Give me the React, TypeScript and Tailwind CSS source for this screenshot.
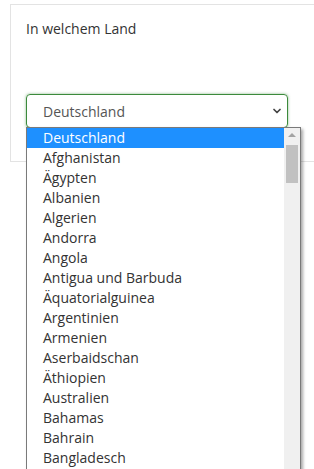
import { ChevronDown } from "lucide-react"

const countries = [
  "Deutschland",
  "Afghanistan",
  "Ägypten",
  "Albanien",
  "Algerien",
  "Andorra",
  "Angola",
  "Antigua und Barbuda",
  "Äquatorialguinea",
  "Argentinien",
  "Armenien",
  "Aserbaidschan",
  "Äthiopien",
  "Australien",
  "Bahamas",
  "Bahrain",
  "Bangladesch",
]

export default function App() {
  return (
    <div className="w-[314px] h-[469px] overflow-hidden bg-white font-['Open_Sans',sans-serif] text-[14px]">
      <div className="relative ml-[10px] mt-[4px] w-[330px] h-[158px] border border-[#e3e3e3] pl-[15px] pt-[14px]">
        <p className="text-[#333] leading-5">In welchem Land</p>

        <div className="mt-[55px] w-[262px] h-[34px] rounded-[4px] border border-[#3c8a3c] shadow-[0_0_3px_rgba(60,138,60,0.6)] flex items-center justify-between pl-[16px] pr-[4px] text-[#555]">
          <span>Deutschland</span>
          <ChevronDown className="w-[12px] h-[12px] text-[#444]" strokeWidth={3.5} />
        </div>

        {/* open list */}
        <div className="absolute left-[15px] top-[122px] w-[275px] h-[360px] bg-white border border-[#7a7a7a] shadow-[2px_2px_3px_rgba(0,0,0,0.35)] flex">
          <div className="flex-1">
            {countries.map((c, i) => (
              <div
                key={c}
                className={`h-5 leading-5 pl-[16px] ${i === 0 ? "bg-[#1e90ff] text-white" : "text-[#333]"}`}
              >
                {c}
              </div>
            ))}
          </div>
          <div className="w-[16px] bg-[#f0f0f0] flex flex-col items-center">
            <div className="mt-[5px] w-0 h-0 border-l-[4px] border-r-[4px] border-b-[4px] border-l-transparent border-r-transparent border-b-[#a3a3a3]" />
            <div className="mt-[8px] w-[12px] h-[38px] bg-[#c1c1c1]" />
          </div>
        </div>
      </div>
    </div>
  )
}
